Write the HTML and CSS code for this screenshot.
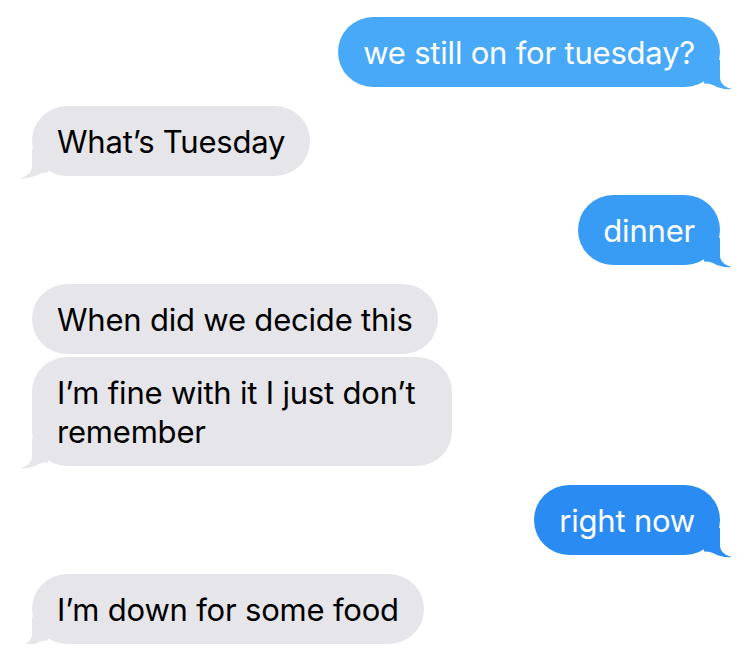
FILE: index.html
```html
<!DOCTYPE html>
<html lang="en">
<head>
  <meta charset="UTF-8" />
  <meta name="viewport" content="width=device-width, initial-scale=1.0" />
  <title>Messages</title>
  <link rel="stylesheet" href="styles.css">
</head>
<body>
  <div class="thread">

    <div class="group me">
      <div class="bubble blue-1">we still on for tuesday?
        <svg class="tail" viewBox="0 0 30 30"><path d="M2 0 L18 0 L18 17 C18 23 22 27 30 29 C24 30 16 28 11 25 C8 24 5 23.5 2 23.6 Z"/></svg>
      </div>
    </div>

    <div class="group them">
      <div class="bubble">What’s Tuesday
        <svg class="tail" viewBox="0 0 30 30"><path d="M2 0 L18 0 L18 17 C18 23 22 27 30 29 C24 30 16 28 11 25 C8 24 5 23.5 2 23.6 Z"/></svg>
      </div>
    </div>

    <div class="group me">
      <div class="bubble blue-2">dinner
        <svg class="tail" viewBox="0 0 30 30"><path d="M2 0 L18 0 L18 17 C18 23 22 27 30 29 C24 30 16 28 11 25 C8 24 5 23.5 2 23.6 Z"/></svg>
      </div>
    </div>

    <div class="group them">
      <div class="bubble">When did we decide this</div>
      <div class="bubble">I’m fine with it I just don’t remember
        <svg class="tail" viewBox="0 0 30 30"><path d="M2 0 L18 0 L18 17 C18 23 22 27 30 29 C24 30 16 28 11 25 C8 24 5 23.5 2 23.6 Z"/></svg>
      </div>
    </div>

    <div class="group me">
      <div class="bubble blue-3">right now
        <svg class="tail" viewBox="0 0 30 30"><path d="M2 0 L18 0 L18 17 C18 23 22 27 30 29 C24 30 16 28 11 25 C8 24 5 23.5 2 23.6 Z"/></svg>
      </div>
    </div>

    <div class="group them">
      <div class="bubble">I’m down for some food
        <svg class="tail" viewBox="0 0 30 30"><path d="M2 0 L18 0 L18 17 C18 23 22 27 30 29 C24 30 16 28 11 25 C8 24 5 23.5 2 23.6 Z"/></svg>
      </div>
    </div>

  </div>
</body>
</html>
```

FILE: styles.css
```css
body {
  margin: 0;
  background-color: white;
  font-family: Inter, "Noto Sans", sans-serif;
}
.thread {
  display: flex;
  flex-direction: column;
  gap: 19px;
  padding: 17px 30px 0 32px;
}
.group {
  display: flex;
  flex-direction: column;
  gap: 3px;
}
.group.me {
  align-items: flex-end;
}
.group.them {
  align-items: flex-start;
}
.bubble {
  --bg: #e5e5ea;
  position: relative;
  box-sizing: border-box;
  max-width: 420px;
  padding: 16px 25px 15px 25px;
  border-radius: 35px;
  background-color: var(--bg);
  color: black;
  font-size: 31px;
  line-height: 39px;
  letter-spacing: -0.2px;
}
.me .bubble {
  color: white;
}
.blue-1 { --bg: #47a9f8; }
.blue-2 { --bg: #389cf5; }
.blue-3 { --bg: #2a8cf2; }

.tail {
  position: absolute;
  bottom: -3px;
  width: 30px;
  height: 30px;
  fill: var(--bg);
}
.me .tail {
  right: -12px;
}
.them .tail {
  left: -12px;
  transform: scaleX(-1);
}
```
